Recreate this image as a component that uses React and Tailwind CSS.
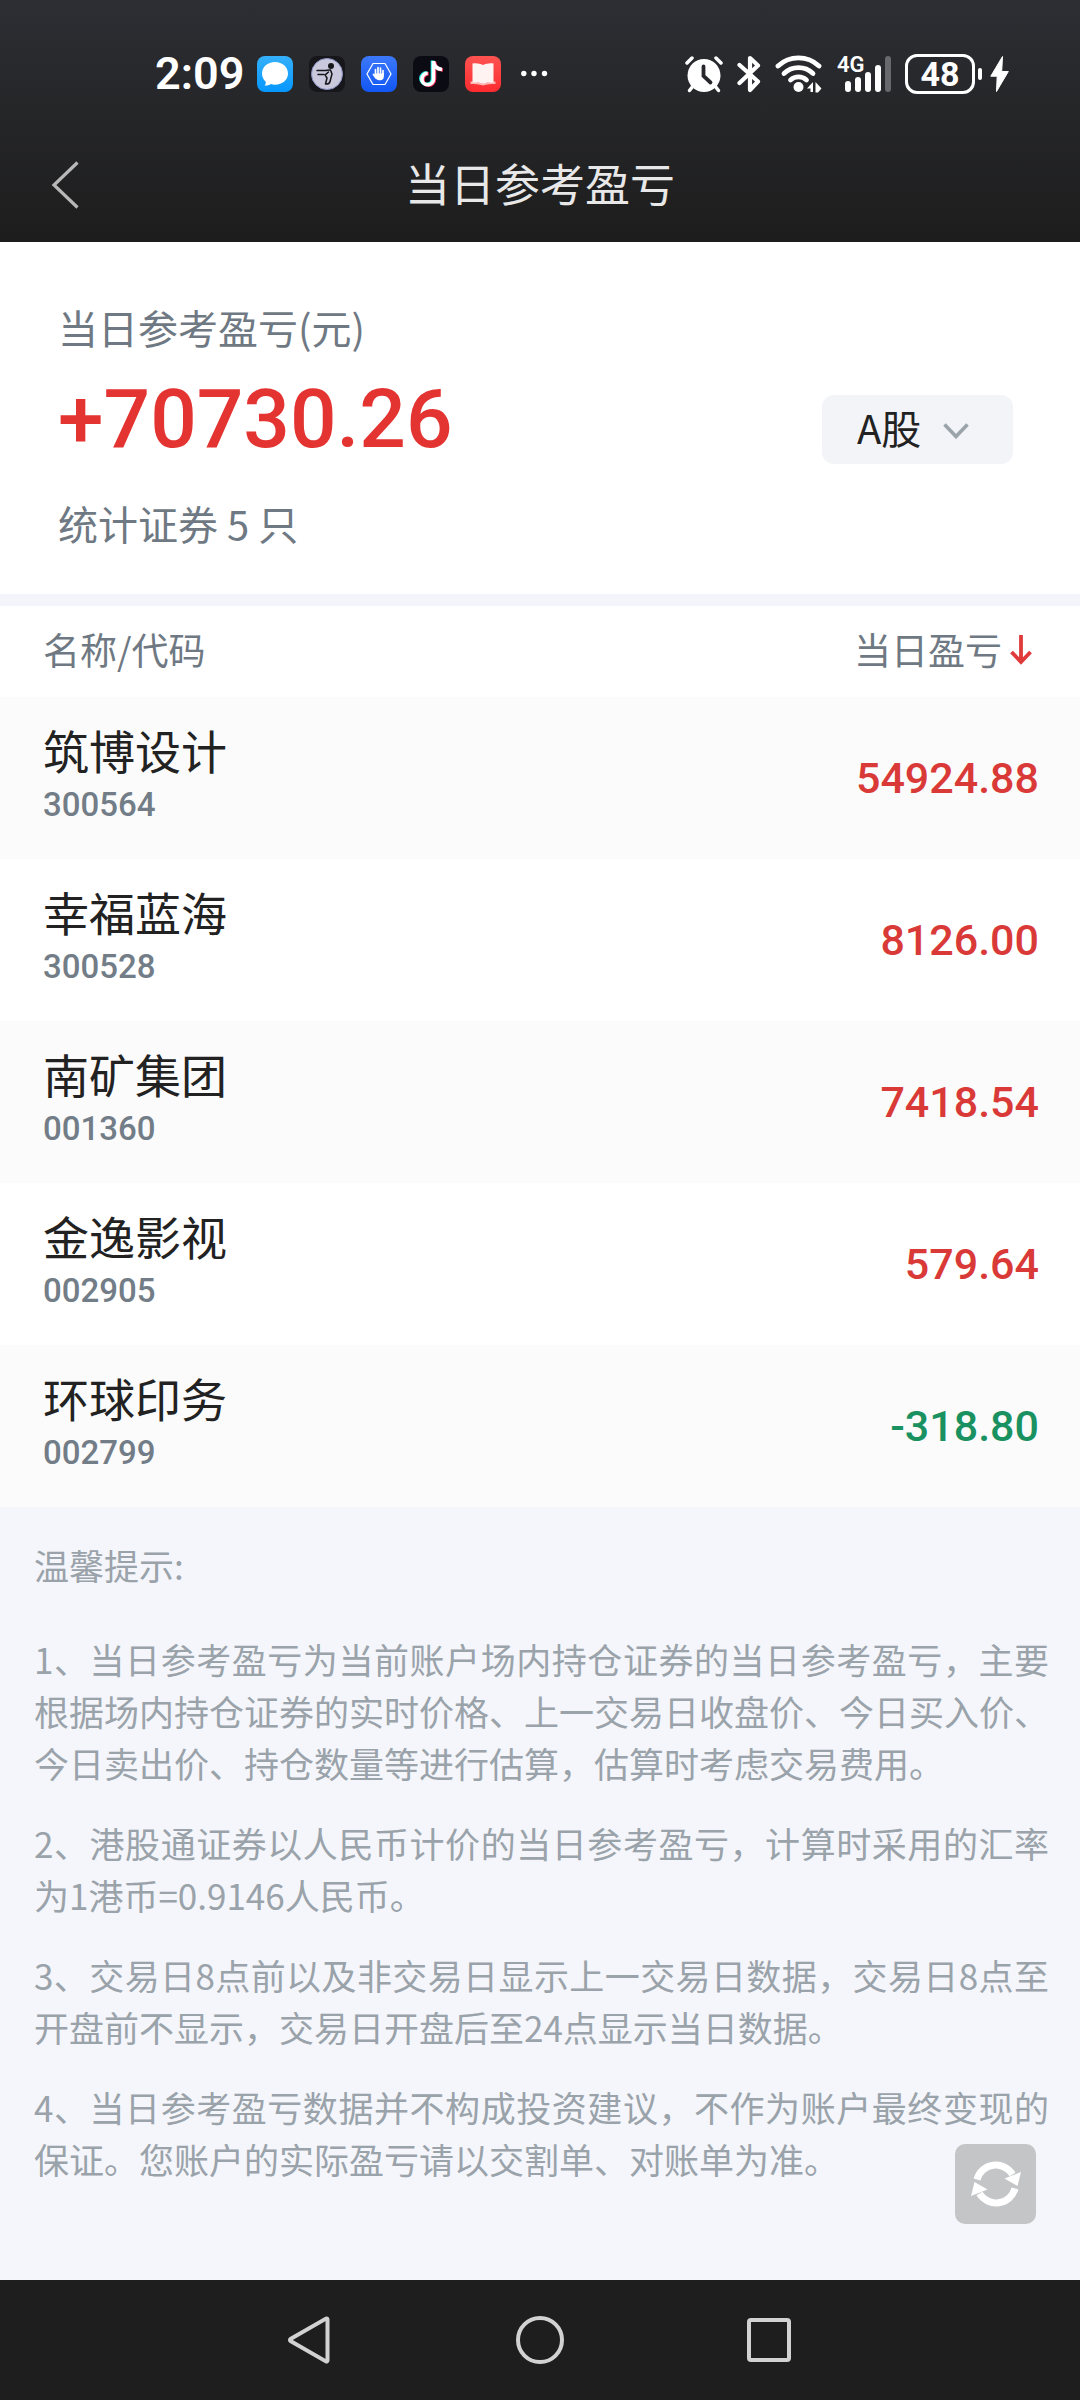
import React, { useState } from "react";

const holdings = [
  { name: "筑博设计", code: "300564", profit: 54924.88 },
  { name: "幸福蓝海", code: "300528", profit: 8126.0 },
  { name: "南矿集团", code: "001360", profit: 7418.54 },
  { name: "金逸影视", code: "002905", profit: 579.64 },
  { name: "环球印务", code: "002799", profit: -318.8 },
];

const tips = [
  "1、当日参考盈亏为当前账户场内持仓证券的当日参考盈亏，主要根据场内持仓证券的实时价格、上一交易日收盘价、今日买入价、今日卖出价、持仓数量等进行估算，估算时考虑交易费用。",
  "2、港股通证券以人民币计价的当日参考盈亏，计算时采用的汇率为1港币=0.9146人民币。",
  "3、交易日8点前以及非交易日显示上一交易日数据，交易日8点至开盘前不显示，交易日开盘后至24点显示当日数据。",
  "4、当日参考盈亏数据并不构成投资建议，不作为账户最终变现的保证。您账户的实际盈亏请以交割单、对账单为准。",
];

const AppIcons = () => (
  <>
    {/* Messages */}
    <svg className="size-9" viewBox="0 0 36 36">
      <defs>
        <linearGradient id="msg" x1="0" y1="0" x2="0" y2="1">
          <stop offset="0" stopColor="#35b0fb" />
          <stop offset="1" stopColor="#0697fd" />
        </linearGradient>
      </defs>
      <rect width="36" height="36" rx="8" fill="url(#msg)" />
      <path d="M18 6C10.500 6 5 11 5 17.500c0 3.300 1.400 6 3.700 8.200.3 1.500-.2 2.800-1.200 3.800 2.500.3 4.700-.2 6.300-1.400 1.300.4 2.700.6 4.200.6 7.500 0 13-4.800 13-11.200S25.500 6 18 6z" fill="#fff" />
    </svg>
    {/* Runner */}
    <svg className="size-9" viewBox="0 0 36 36">
      <rect width="36" height="36" rx="8" fill="#17171b" />
      <circle cx="18" cy="18" r="15.500" fill="#c9c8dc" stroke="#8b93c4" strokeWidth="1" />
      <circle cx="22" cy="10" r="3" fill="#16161a" />
      <path d="M8 14.500h8c2 0 3-1 5.500-.5L23 18l-2 7.500c-.5 2-1.500 3-4.500 2.500M9 18.500h6M19.500 16c-2 2-4.500 3-2.500 4.500l1 1.500-1.500 6" fill="none" stroke="#16161a" strokeWidth="1.500" strokeLinecap="round" strokeLinejoin="round" />
    </svg>
    {/* Hand shield */}
    <svg className="size-9" viewBox="0 0 36 36">
      <defs>
        <linearGradient id="shield" x1="0" y1="0" x2="0" y2="1">
          <stop offset="0" stopColor="#3c78fa" />
          <stop offset="1" stopColor="#1257f5" />
        </linearGradient>
      </defs>
      <rect width="36" height="36" rx="8" fill="url(#shield)" />
      <path d="M12 7.500h12L30 18l-6 10.500H12L6 18z" fill="none" stroke="#fff" strokeWidth="1.200" />
      <path d="M14.500 19v-5.500M17 18v-6.500M19.500 18v-6M22 19v-4.500M12.500 18.500l2.500 3.500" stroke="#fff" strokeWidth="1.700" strokeLinecap="round" />
      <path d="M13.700 17.500h9.100v3.500c0 1.800-1.500 3.200-3.400 3.200h-1.400c-1.500 0-2.500-.7-3.200-1.900z" fill="#fff" />
    </svg>
    {/* Music note */}
    <svg className="size-9" viewBox="0 0 36 36">
      <rect width="36" height="36" rx="8" fill="#0b0b14" />
      <g fill="none" strokeWidth="3.600">
        <path d="M19.500 4.500v18a5.800 5.800 0 1 1-5.800-5.800M19.500 5c.5 4.500 3.500 7.500 8.500 8" stroke="#2af0ea" />
        <path d="M21.500 5.500v18a5.800 5.800 0 1 1-5.800-5.800M21.500 6c.5 4.500 3.500 7.500 8.500 8" stroke="#fb2b54" />
        <path d="M20.500 5v18a5.800 5.800 0 1 1-5.800-5.800M20.500 5.500c.5 4.500 3.500 7.500 8.500 8" stroke="#fff" />
      </g>
    </svg>
    {/* Book */}
    <svg className="size-9" viewBox="0 0 36 36">
      <defs>
        <linearGradient id="book" x1="0" y1="0" x2="0" y2="1">
          <stop offset="0" stopColor="#fd5350" />
          <stop offset="1" stopColor="#fc2b30" />
        </linearGradient>
      </defs>
      <rect width="36" height="36" rx="8" fill="url(#book)" />
      <path d="M5.500 25.500h3l9.500 2 9.500-2h3V28c-4.500 0-8.500 0-12.500 1.500C14 28 10 28 5.500 28z" fill="#fdb5b3" />
      <path d="M7.500 7.500c4-.8 7.500.3 10.500 1.500 3-1.200 6.500-2.300 10.500-1.500V26.500c-4-.3-7.500 0-10.500 1.200-3-1.200-6.500-1.500-10.500-1.200z" fill="#fff3f2" />
    </svg>
    {/* More */}
    <svg className="ml-1 h-9 w-7" viewBox="0 0 28 36" fill="#fff">
      <circle cx="2.800" cy="17.500" r="2.700" />
      <circle cx="13" cy="17.500" r="2.700" />
      <circle cx="23.500" cy="17.500" r="2.700" />
    </svg>
  </>
);

const SystemIcons = () => (
  <>
    {/* Alarm */}
    <svg className="h-[38px] w-[38px]" viewBox="0 0 38 38">
      <g stroke="#fff" strokeLinecap="round" fill="none">
        <path d="M2 8l5-5M36 8l-5-5" strokeWidth="3.500" />
        <path d="M8 31l-3.500 4.500M30 31l3.500 4.500" strokeWidth="3.500" />
      </g>
      <circle cx="19" cy="20.500" r="16.500" fill="#fff" />
      <path d="M18.500 11.500v9.500l7 6.500" fill="none" stroke="#27282c" strokeWidth="3.800" strokeLinecap="round" />
    </svg>
    {/* Bluetooth */}
    <svg className="h-[38px] w-6" viewBox="0 0 24 38">
      <path d="M2.500 10L21 26.500 13 35V3l8 7.500L2.500 28" fill="none" stroke="#fff" strokeWidth="4.200" strokeLinecap="round" strokeLinejoin="round" />
    </svg>
    {/* Wifi */}
    <svg className="h-[38px] w-12" viewBox="0 0 48 38">
      <g fill="none" stroke="#fff" strokeWidth="4.800" strokeLinecap="round">
        <path d="M3 11a30 30 0 0 1 41 0" />
        <path d="M9 18.500a21 21 0 0 1 29 0" />
        <path d="M15.500 25a12 12 0 0 1 16 0" />
      </g>
      <circle cx="23.500" cy="32" r="5" fill="#fff" />
      <path d="M38 27v10h-2.500v-3.500H32zM40.500 27l6 6.500-3.500 4h-2.500z" fill="#fff" />
    </svg>
    {/* Mobile signal */}
    <div className="relative">
      <svg className="h-[38px] w-[54px]" viewBox="0 0 54 38" fill="#fff">
        <rect x="8" y="26" width="6" height="11" rx="3" />
        <rect x="18" y="22" width="6" height="15" rx="3" />
        <rect x="28" y="17" width="6" height="20" rx="3" />
        <rect x="38" y="10" width="6" height="27" rx="3" />
        <rect x="48" y="1" width="6" height="36" rx="3" fill="#68696d" />
      </svg>
      <span className="absolute left-0 top-0 text-[22px] leading-5 font-semibold">4G</span>
    </div>
    <div className="flex items-center">
      <span className="flex h-10 w-[70px] items-center justify-center rounded-xl border-3 border-white text-[34px] leading-8 font-bold">
        48
      </span>
      <span className="ml-[3px] h-3 w-1 rounded-full bg-white" />
      <svg className="ml-2 h-[38px] w-[19px]" viewBox="0 0 19 38">
        <path d="M12.500 1.500L.8 21.200h6.400L6.500 36.500 18.300 16.500h-6.600z" fill="#fff" stroke="#fff" strokeWidth="1" strokeLinejoin="round" />
      </svg>
    </div>
  </>
);

const StatusBar = () => (
  <div className="flex h-[147px] items-center justify-between pr-[71px] pl-[155px] font-[Roboto,sans-serif] text-white">
    <div className="flex items-center gap-4">
      <span className="w-[86px] text-[45px] leading-none font-semibold">2:09</span>
      <AppIcons />
    </div>
    <div className="flex items-center gap-[14px]">
      <SystemIcons />
    </div>
  </div>
);

const Summary = ({ market, setMarket }) => {
  const total = holdings.reduce((sum, item) => sum + item.profit, 0);

  return (
    <section className="flex items-center justify-between bg-white pt-[61px] pr-[67px] pb-[47px] pl-[58px]">
      <div className="text-[40px] leading-[48px] text-[#6f7983]">
        <h2>当日参考盈亏(元)</h2>
        <p className="mt-6 font-[Roboto,sans-serif] text-[82px] leading-[88px] font-medium text-[#e43432]">
          {total > 0 ? "+" : ""}
          {total.toFixed(2)}
        </p>
        <p className="mt-9">统计证券 {holdings.length} 只</p>
      </div>
      <div className="relative mt-2">
        <select
          aria-label="市场"
          value={market}
          onChange={(e) => setMarket(e.target.value)}
          className="h-[69px] w-[191px] appearance-none rounded-xl bg-[#f3f4f7] pb-1 pl-[35px] text-[40px] text-[#222222]"
        >
          <option>A股</option>
          <option>港股通</option>
        </select>
        <svg className="pointer-events-none absolute top-7 right-11 h-4 w-[26px]" viewBox="0 0 26 16">
          <path d="M1.500 1.500L13 13.500 24.500 1.500" fill="none" stroke="#9ba3ab" strokeWidth="3.600" />
        </svg>
      </div>
    </section>
  );
};

const HoldingsTable = () => {
  const [desc, setDesc] = useState(true);
  const rows = [...holdings].sort((a, b) => (desc ? b.profit - a.profit : a.profit - b.profit));

  return (
    <div className="border-t-12 border-[#f4f5fa] bg-white">
      <table className="w-full">
        <thead>
          <tr className="h-[91px] text-[37px] text-[#6f7983]">
            <th className="pb-1 pl-[43px] text-left font-normal">名称/代码</th>
            <th className="pr-12 pb-1 text-right font-normal">
              <button onClick={() => setDesc(!desc)} className="inline-flex items-center gap-2">
                当日盈亏
                <svg className={desc ? "h-[30px] w-[22px]" : "h-[30px] w-[22px] rotate-180"} viewBox="0 0 22 30">
                  <path d="M11 0v27M1.500 17l9.500 10 9.500-10" fill="none" stroke="#e03a3a" strokeWidth="3.800" />
                </svg>
              </button>
            </th>
          </tr>
        </thead>
        <tbody>
          {rows.map((item) => (
            <tr key={item.code} className="h-[162px] odd:bg-[#fbfbfb]">
              <td className="pb-2 pl-[43px]">
                <div className="text-[46px] leading-[56px] text-[#222222]">{item.name}</div>
                <div className="mt-1.5 font-[Roboto,sans-serif] text-[33px] leading-[44px] font-medium text-[#727d87]">
                  {item.code}
                </div>
              </td>
              <td
                className={`pr-[41px] text-right font-[Roboto,sans-serif] text-[43px] font-medium ${
                  item.profit < 0 ? "text-[#1a9160]" : "text-[#d93a38]"
                }`}
              >
                {item.profit.toFixed(2)}
              </td>
            </tr>
          ))}
        </tbody>
      </table>
    </div>
  );
};

const Tips = () => (
  <section className="relative flex-1 pt-8 pr-[31px] pb-20 pl-[34px] text-[35px] leading-[52px] text-[#9aa2aa]">
    <h3 className="mb-[42px]">温馨提示:</h3>
    <div className="space-y-7 text-justify">
      {tips.map((tip) => (
        <p key={tip}>{tip}</p>
      ))}
    </div>
    {/* Floating refresh */}
    <button
      aria-label="刷新"
      className="absolute right-11 bottom-14 flex h-20 w-[81px] items-center justify-center rounded-[10px] bg-[#c4c5c7]"
    >
      <svg className="h-12 w-[52px]" viewBox="0 0 52 48">
        <path d="M7 19.500A19.500 19.500 0 0 1 42.500 14.500M45 28.500A19.500 19.500 0 0 1 9.500 33.500" fill="none" stroke="#fff" strokeWidth="7" />
        <path d="M51 12l-3.500 14-13-7.500zM1 36l3.500-14 13 7.500z" fill="#fff" />
      </svg>
    </button>
  </section>
);

const NavBar = () => (
  <nav className="flex h-[120px] items-center justify-center gap-[181px] bg-[#1e1e1e]">
    <button aria-label="返回">
      <svg className="size-12" viewBox="0 0 48 48">
        <path d="M40.500 3.500v41a1 1 0 0 1-1.600.8L3.500 25a1.200 1.200 0 0 1 0-2L38.900 2.700a1 1 0 0 1 1.600.8z" fill="none" stroke="#d2d2d2" strokeWidth="4" />
      </svg>
    </button>
    <button aria-label="主页">
      <svg className="size-12" viewBox="0 0 48 48">
        <circle cx="24" cy="24" r="22" fill="none" stroke="#d2d2d2" strokeWidth="4" />
      </svg>
    </button>
    <button aria-label="最近任务">
      <svg className="size-12" viewBox="0 0 48 48">
        <rect x="4" y="4" width="40" height="40" rx="2" fill="none" stroke="#d2d2d2" strokeWidth="4" />
      </svg>
    </button>
  </nav>
);

const App = () => {
  const [market, setMarket] = useState("A股");

  return (
    <div
      lang="zh-CN"
      className="flex min-h-screen flex-col bg-[#f4f6fb] font-['Noto_Sans_CJK_SC',sans-serif]"
    >
      <header className="bg-linear-to-b from-[#2d2e33] to-[#1d1d1d] pb-5">
        <StatusBar />
        <div className="grid h-[75px] grid-cols-[1fr_auto_1fr] items-center">
          <button aria-label="返回" className="ml-[51px] w-fit">
            <svg className="h-12 w-7" viewBox="0 0 28 48">
              <path d="M26.500 1.500L3 24l23.500 22.500" fill="none" stroke="#b8b8b8" strokeWidth="3.200" />
            </svg>
          </button>
          <h1 className="pb-1 text-[45px] leading-none text-[#e8e8e8]">当日参考盈亏</h1>
        </div>
      </header>
      <Summary market={market} setMarket={setMarket} />
      <HoldingsTable />
      <Tips />
      <NavBar />
    </div>
  );
};

export default App;
